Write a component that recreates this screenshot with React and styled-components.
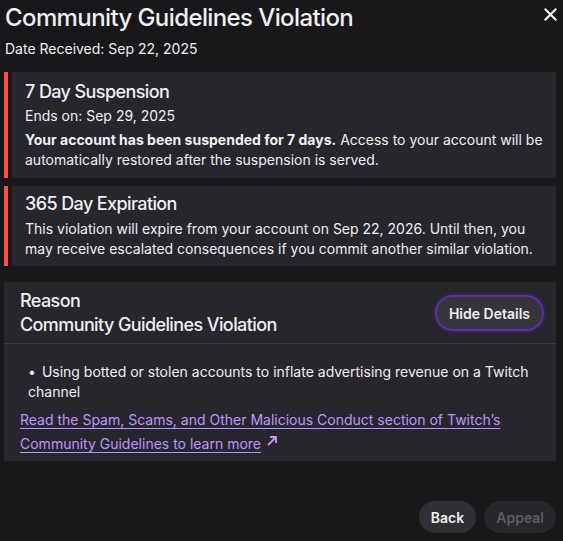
import React from "react";
import styled, { createGlobalStyle } from "styled-components";

const GlobalStyle = createGlobalStyle`
  html, body {
    margin: 0;
    padding: 0;
    background: #18181b;
    color: #efeff1;
    font-family: Inter, "Noto Sans", sans-serif;
  }
`;

function App() {
  return (
    <Page>
      <GlobalStyle />
      <Header>
        <Title>Community Guidelines Violation</Title>
        <CloseButton aria-label="Close">
          <svg width="13" height="13" viewBox="0 0 13 13">
            <path d="M1.5 1.5 L11.5 11.5 M11.5 1.5 L1.5 11.5" stroke="#efeff1" strokeWidth="2.2" strokeLinecap="square" />
          </svg>
        </CloseButton>
      </Header>
      <SubText>Date Received: Sep 22, 2025</SubText>

      <Notice $gap={13}>
        <Bar />
        <NoticeBody $pad="8px 10px 8px 13px">
          <NoticeTitle>7 Day Suspension</NoticeTitle>
          <Line>Ends on: Sep 29, 2025</Line>
          <Paragraph>
            <strong>Your account has been suspended for 7 days.</strong> Access to your account will be
            automatically restored after the suspension is served.
          </Paragraph>
        </NoticeBody>
      </Notice>

      <Notice $gap={8}>
        <Bar />
        <NoticeBody $pad="6px 10px 7px 13px">
          <NoticeTitle>365 Day Expiration</NoticeTitle>
          <Paragraph $top={3}>
            This violation will expire from your account on Sep 22, 2026. Until then, you
            may receive escalated consequences if you commit another similar violation.
          </Paragraph>
        </NoticeBody>
      </Notice>

      <ReasonCard>
        <ReasonHead>
          <div>
            <ReasonLine>Reason</ReasonLine>
            <ReasonLine>Community Guidelines Violation</ReasonLine>
          </div>
          <PillButton $focused>Hide Details</PillButton>
        </ReasonHead>
        <ReasonBody>
          <Bullets>
            <li>Using botted or stolen accounts to inflate advertising revenue on a Twitch channel</li>
          </Bullets>
          <LearnLink href="#">
            Read the Spam, Scams, and Other Malicious Conduct section of Twitch’s Community Guidelines to learn more
          </LearnLink>
          <ArrowIcon width="12" height="12" viewBox="0 0 12 12">
            <path d="M2 10 L10 2 M4 2 H10 V8" stroke="#bf94ff" strokeWidth="1.8" fill="none" />
          </ArrowIcon>
        </ReasonBody>
      </ReasonCard>

      <Footer>
        <PillButton>Back</PillButton>
        <PillButton $disabled>Appeal</PillButton>
      </Footer>
    </Page>
  );
}

export default App;

const Page = styled.div`
  width: 563px;
  height: 541px;
  box-sizing: border-box;
  padding: 0 7px 0 4px;
  display: flex;
  flex-direction: column;
`;

const Header = styled.div`
  display: flex;
  justify-content: space-between;
  align-items: flex-start;
  padding: 3px 0 0 1px;
`;

const Title = styled.h1`
  margin: 0;
  font-size: 24px;
  font-weight: 500;
  line-height: 30px;
  letter-spacing: -0.6px;
`;

const CloseButton = styled.button`
  background: none;
  border: none;
  padding: 0;
  margin: 5px -1px 0 0;
  cursor: pointer;
  display: flex;
`;

const SubText = styled.div`
  font-size: 14px;
  line-height: 20px;
  padding: 6px 0 0 1px;
`;

const Notice = styled.div`
  display: flex;
  gap: 4px;
  margin-top: ${(p) => p.$gap}px;
`;

const Bar = styled.div`
  width: 4px;
  background: #ff4f4d;
  flex-shrink: 0;
`;

const NoticeBody = styled.div`
  flex: 1;
  background: #26262c;
  padding: ${(p) => p.$pad};
`;

const NoticeTitle = styled.div`
  font-size: 18px;
  line-height: 24px;
  font-weight: 500;
  letter-spacing: -0.6px;
`;

const Line = styled.div`
  font-size: 14px;
  line-height: 20px;
  margin-top: 2px;
`;

const Paragraph = styled.p`
  margin: ${(p) => (p.$top != null ? p.$top : 4)}px 0 0;
  font-size: 14px;
  line-height: 20px;

  strong {
    font-weight: 700;
  }
`;

const ReasonCard = styled.div`
  margin-top: 16px;
  background: #26262c;
`;

const ReasonHead = styled.div`
  display: flex;
  justify-content: space-between;
  align-items: center;
  padding: 7px 14px 6px 16px;
  border-bottom: 1px solid #3a3a3f;
`;

const ReasonLine = styled.div`
  font-size: 18px;
  line-height: 24px;
  font-weight: 500;
  letter-spacing: -0.6px;
`;

const ReasonBody = styled.div`
  padding: 18px 20px 5px 16px;
  font-size: 14px;
  line-height: 20px;
`;

const Bullets = styled.ul`
  margin: 0 0 6px;
  padding: 0 0 0 8px;
  list-style: none;

  li::before {
    content: "•";
    margin-right: 6px;
  }
`;

const LearnLink = styled.a`
  color: #bf94ff;
  text-decoration: underline;
  text-underline-offset: 3px;
  line-height: 24px;
`;

const ArrowIcon = styled.svg`
  margin-left: 5px;
  vertical-align: 2px;
`;

const Footer = styled.div`
  margin-top: auto;
  display: flex;
  justify-content: flex-end;
  gap: 8px;
  padding-bottom: 8px;
`;

const PillButton = styled.button`
  font-family: Inter, "Noto Sans", sans-serif;
  font-size: 14px;
  font-weight: 600;
  height: 32px;
  padding: 0 12px;
  border-radius: 16px;
  border: none;
  cursor: pointer;
  background: ${(p) => (p.$disabled ? "#26262b" : p.$focused ? "#35353b" : "#2f2f35")};
  color: ${(p) => (p.$disabled ? "#5c5c63" : "#efeff1")};
  box-shadow: ${(p) => (p.$focused ? "0 0 0 2px #5c2e9e, 0 0 4px 2px rgba(119, 44, 232, 0.45)" : "none")};
  flex-shrink: 0;
`;
